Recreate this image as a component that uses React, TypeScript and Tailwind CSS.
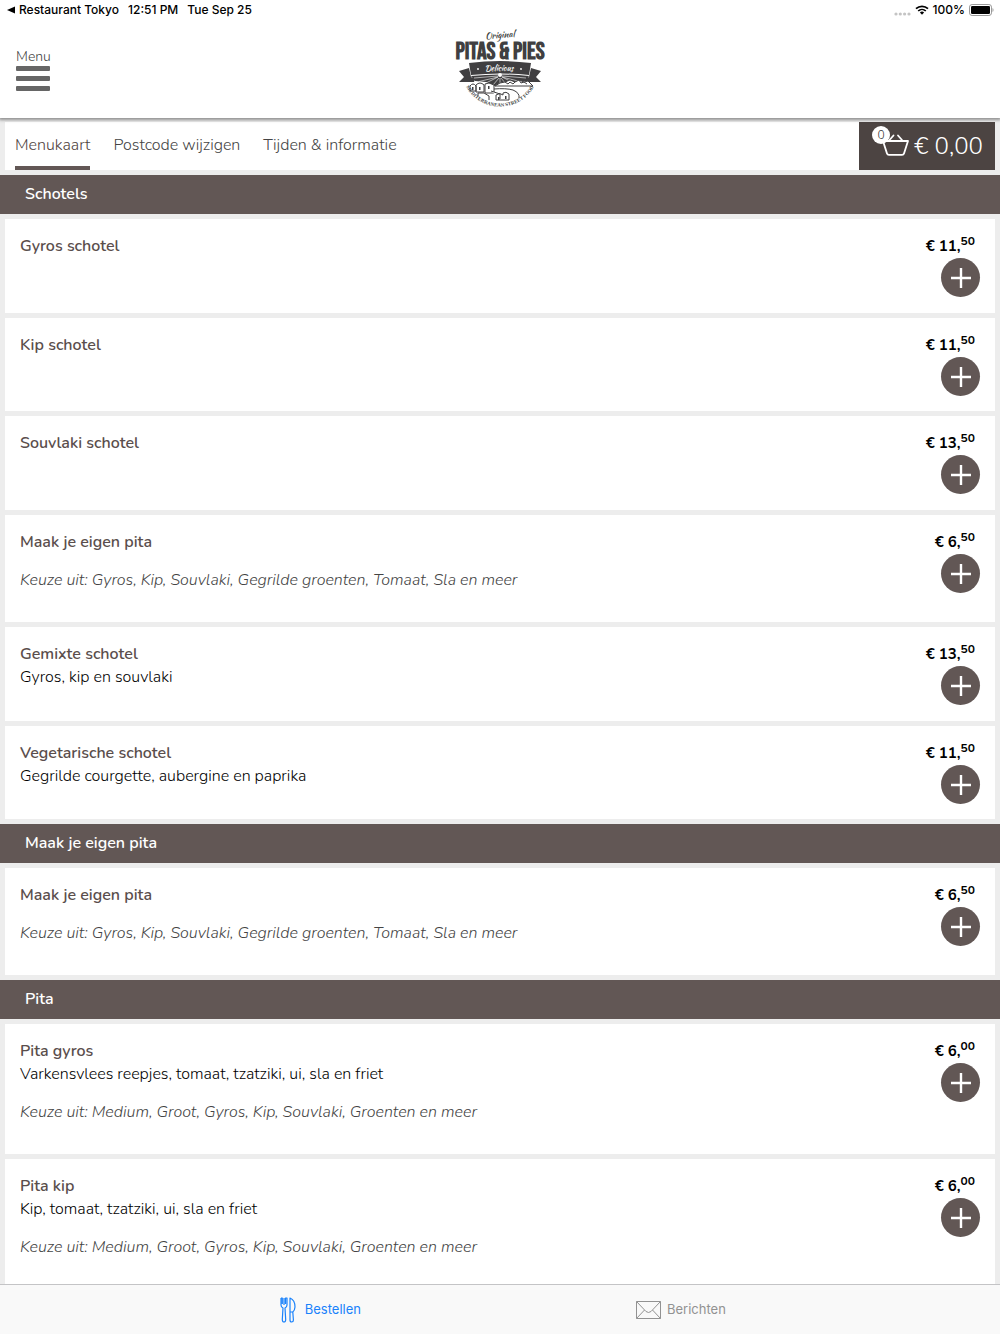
type Item = {
  name: string;
  description?: string;
  choices?: string;
  euros: string;
  cents: string;
};

type Section = { title: string; items: Item[] };

const pitaChoices = "Keuze uit: Medium, Groot, Gyros, Kip, Souvlaki, Groenten en meer";

const ownPita: Item = {
  name: "Maak je eigen pita",
  choices: "Keuze uit: Gyros, Kip, Souvlaki, Gegrilde groenten, Tomaat, Sla en meer",
  euros: "6",
  cents: "50",
};

const sections: Section[] = [
  {
    title: "Schotels",
    items: [
      { name: "Gyros schotel", euros: "11", cents: "50" },
      { name: "Kip schotel", euros: "11", cents: "50" },
      { name: "Souvlaki schotel", euros: "13", cents: "50" },
      ownPita,
      { name: "Gemixte schotel", description: "Gyros, kip en souvlaki", euros: "13", cents: "50" },
      {
        name: "Vegetarische schotel",
        description: "Gegrilde courgette, aubergine en paprika",
        euros: "11",
        cents: "50",
      },
    ],
  },
  { title: "Maak je eigen pita", items: [ownPita] },
  {
    title: "Pita",
    items: [
      {
        name: "Pita gyros",
        description: "Varkensvlees reepjes, tomaat, tzatziki, ui, sla en friet",
        choices: pitaChoices,
        euros: "6",
        cents: "00",
      },
      {
        name: "Pita kip",
        description: "Kip, tomaat, tzatziki, ui, sla en friet",
        choices: pitaChoices,
        euros: "6",
        cents: "00",
      },
    ],
  },
];

function StatusBar() {
  return (
    <div className="flex h-5 items-center justify-between pl-[7px] pr-[6px] font-['Inter',sans-serif] text-xs font-medium text-black">
      <div className="flex items-center gap-[9px]">
        <span className="flex items-center gap-1">
          <svg width="8" height="8" viewBox="0 0 8 8" aria-hidden="true">
            <path d="M0 4 8 .5v7z" />
          </svg>
          Restaurant Tokyo
        </span>
        <span>12:51 PM</span>
        <span>Tue Sep 25</span>
      </div>
      <div className="flex items-center gap-1">
        <svg width="17" height="4" viewBox="0 0 17 4" fill="#c4c4c4" className="mt-2" aria-hidden="true">
          <circle cx="2" cy="2" r="1.6" />
          <circle cx="6.3" cy="2" r="1.6" />
          <circle cx="10.6" cy="2" r="1.6" />
          <circle cx="15" cy="2" r="1.6" />
        </svg>
        <svg width="14" height="10" viewBox="0 0 14 10" aria-hidden="true">
          <path d="M1 3.7a8.7 8.7 0 0 1 12 0M3.2 6a5.5 5.5 0 0 1 7.6 0" fill="none" stroke="#000" strokeWidth="1.7" />
          <path d="M4.9 7.5a3.2 3.2 0 0 1 4.2 0L7 9.7z" />
        </svg>
        <span>100%</span>
        <svg width="25" height="12" viewBox="0 0 25 12" aria-hidden="true">
          <rect x=".5" y=".5" width="22" height="11" rx="2.6" fill="#fff" stroke="#999" />
          <rect x="2" y="2" width="19" height="8" rx="1.3" />
          <path d="M23.5 4v4c1.4-.6 1.4-3.4 0-4" fill="#999" />
        </svg>
      </div>
    </div>
  );
}

function Logo() {
  return (
    <svg width="92" height="84" viewBox="0 0 92 84" role="img" aria-label="Original Pitas & Pies" fill="#403f41">
      <text
        x="46"
        y="10"
        textAnchor="middle"
        transform="rotate(-5 46 8)"
        className="font-['Kaushan_Script','Liberation_Serif',serif] text-[9px]"
      >
        Original
      </text>
      <text
        x="46"
        y="31"
        textAnchor="middle"
        className="font-['Bebas_Neue','Roboto_Condensed',sans-serif] text-[24px] font-bold"
      >
        PITAS &amp; PIES
      </text>
      <path d="M5 43l10-3 2 9 4 2-1 3H5l5-5zM87 43l-10-3-2 9-4 2 1 3h15l-5-5z" />
      <path d="M15 35q31-4 62 0l-2 12q-29-3-58 0z" />
      <text
        x="45"
        y="43"
        textAnchor="middle"
        fill="#fff"
        className="font-['Kaushan_Script','Liberation_Serif',serif] text-[8px]"
      >
        Delicious
      </text>
      <circle cx="24" cy="41" r=".9" fill="#fff" />
      <circle cx="67" cy="41" r=".9" fill="#fff" />
      <path d="M17 48q29-3 58 0l-3 5-22 3-10 2-8-4-11-1z" />
      <path
        d="M44 48 20 50M44 49 25 53.500M44 49 32 55M45 50 39 57M46 50v7M47 50l5 6M48 49l10 5M48 49l16 4M48 48l24 2"
        stroke="#fff"
        strokeWidth=".6"
      />
      <circle cx="46" cy="47" r="2" fill="#fff" />
      <g fill="#fff" stroke="#403f41" strokeWidth="1">
        <path d="M41 58q5-4 10-4l5-2 5 2 4-2 5 2 4-1 5 5z" />
        <path d="M51 54l3 2 2-2 3 2 2-2M65 52l2 3 3-1 3 2" fill="none" />
        <path d="M16 63v-5q3-4 6 0v5zM22 64v-7q4-4 8 0v7zM31 65v-9l4-1 5 2v8z" />
        <path d="M24 68v-3h6l5 3v4M40 61q12-1 19 1 7 3 6 8" fill="none" />
        <path d="M37 63l9 3v5M42 72v-5q4-3 7 0v-2q3-2 6 1v6z" />
      </g>
      <path d="M18 59h1.500v3H18zM25 59h1.500v3H25zM34 58h1.500v3H34zM44 69h1.500v3H44zM51 68h1.500v3H51z" />
      <path id="logo-arc" d="M9 52A39 39 0 0 0 83 52" fill="none" />
      <text className="font-['Liberation_Serif',serif] text-[5px] font-bold">
        <textPath href="#logo-arc" startOffset="50%" textAnchor="middle">
          MEDITERRANEAN STREET FOOD
        </textPath>
      </text>
    </svg>
  );
}

function Header() {
  return (
    <header className="relative z-10 shrink-0 bg-white shadow-[0_1px_3px_1px_rgba(0,0,0,0.4)]">
      <StatusBar />
      <div className="grid h-[98px] grid-cols-[1fr_auto_1fr] items-start px-4">
        <button
          type="button"
          className="mt-[27px] flex w-[34px] flex-col gap-[5px] text-left text-sm font-light leading-[19px] text-[#444]"
        >
          <span className="-mb-[5px]">Menu</span>
          <span className="h-[5px] w-full rounded-[1px] bg-[#666]" />
          <span className="h-[5px] w-full rounded-[1px] bg-[#666]" />
          <span className="h-[5px] w-full rounded-[1px] bg-[#666]" />
        </button>
        <div className="mt-2">
          <Logo />
        </div>
      </div>
    </header>
  );
}

function Navigation() {
  return (
    <nav className="mx-[5px] mt-1 flex h-12 justify-between bg-white">
      <div className="flex gap-[23px] pl-[10px] text-base font-light leading-[46px] text-[#444]">
        <a href="#menukaart" aria-current="page" className="border-b-4 border-[#625755] text-[#4f4341]">
          Menukaart
        </a>
        <a href="#postcode">Postcode wijzigen</a>
        <a href="#informatie">Tijden &amp; informatie</a>
      </div>
      <button
        type="button"
        className="flex items-center gap-[5px] bg-[#4c4442] px-[13px] pr-3 text-2xl font-light text-white"
      >
        <svg width="37" height="32" viewBox="0 0 37 32" aria-hidden="true" className="-mt-3">
          <g fill="none" stroke="#fff" strokeWidth="1.800" strokeLinejoin="round" strokeLinecap="round">
            <path d="M11 17h25l-4 12.500q-.4 1.300-2 1.300H17q-1.600 0-2-1.300z" />
            <path d="m17.500 16 4-4.500M30 16l-4-4.500" />
          </g>
          <circle cx="9" cy="11" r="9" fill="#fff" />
          <text x="9" y="15" textAnchor="middle" fill="#333" className="text-[12px]">
            0
          </text>
        </svg>
        € 0,00
      </button>
    </nav>
  );
}

function MenuItem({ item }: { item: Item }) {
  return (
    <li className="flex min-h-[94px] justify-between bg-white px-[15px] pb-[30px] pt-4 text-base leading-[23px] even:min-h-[93px]">
      <div>
        <h3 className="font-semibold text-[#5a4e4c]">{item.name}</h3>
        {item.description && <p className="font-[350] text-black">{item.description}</p>}
        {item.choices && <p className="mt-[15px] font-light italic text-[#444]">{item.choices}</p>}
      </div>
      <div className="-mb-4 flex flex-col items-end">
        <p className="flex pr-[5px] text-[15px] font-bold text-black">
          € {item.euros},<span className="-mt-[5px] text-xs font-bold leading-[23px]">{item.cents}</span>
        </p>
        <button
          type="button"
          aria-label={`${item.name} toevoegen`}
          className="flex size-[39px] items-center justify-center rounded-full bg-[#625755]"
        >
          <svg width="20" height="20" viewBox="0 0 20 20" stroke="#fff" strokeWidth="2.400" aria-hidden="true">
            <path d="M10 0v20M0 10h20" />
          </svg>
        </button>
      </div>
    </li>
  );
}

function TabBar() {
  return (
    <nav className="grid h-[50px] shrink-0 grid-cols-2 border-t border-[#c4c4c6] bg-[#f9f9f9] font-['Inter',sans-serif] text-[13px]">
      <a href="#bestellen" className="flex items-center justify-end gap-[9px] pr-[139px] text-[#1a82fb]">
        <svg
          width="16"
          height="26"
          viewBox="0 0 16 26"
          fill="none"
          stroke="currentColor"
          strokeWidth="1.200"
          strokeLinejoin="round"
          aria-hidden="true"
        >
          <path d="M1 1v7q0 2 2 3l-.7 11.500q0 2.500 1.700 2.500t1.700-2.500L5 11q2-1 2-3V1H5.500v6M1 1h1.300v6M4 1v7" />
          <path d="M10 1v22q0 2 1.700 2t1.700-2l-.6-8q2-1.600 2.200-5Q15 3 10 1zM10 15h3" />
        </svg>
        Bestellen
      </a>
      <a href="#berichten" className="flex items-center gap-[6px] pl-[136px] text-[#929292]">
        <svg width="25" height="18" viewBox="0 0 25 18" fill="none" stroke="currentColor" aria-hidden="true">
          <path d="M.5.5h24v17H.5zM.5.5 10 10.500q2.500 2 5 0L24.500.5M.5 17.500l8-8.500M24.500 17.500l-8-8.500" />
        </svg>
        Berichten
      </a>
    </nav>
  );
}

export default function App() {
  return (
    <div className="flex h-screen flex-col bg-[#ededed] font-['Nunito','Open_Sans',sans-serif]">
      <Header />
      <main className="min-h-0 flex-1 overflow-y-auto [scrollbar-width:none]">
        <Navigation />
        {sections.map((section) => (
          <section key={section.title} className="mt-[5px]">
            <h2 className="bg-[#625755] pl-[25px] text-base font-semibold leading-[39px] text-white">
              {section.title}
            </h2>
            <ul className="mx-[5px] mt-[5px] flex flex-col gap-[5px]">
              {section.items.map((item) => (
                <MenuItem key={item.name} item={item} />
              ))}
            </ul>
          </section>
        ))}
      </main>
      <TabBar />
    </div>
  );
}
